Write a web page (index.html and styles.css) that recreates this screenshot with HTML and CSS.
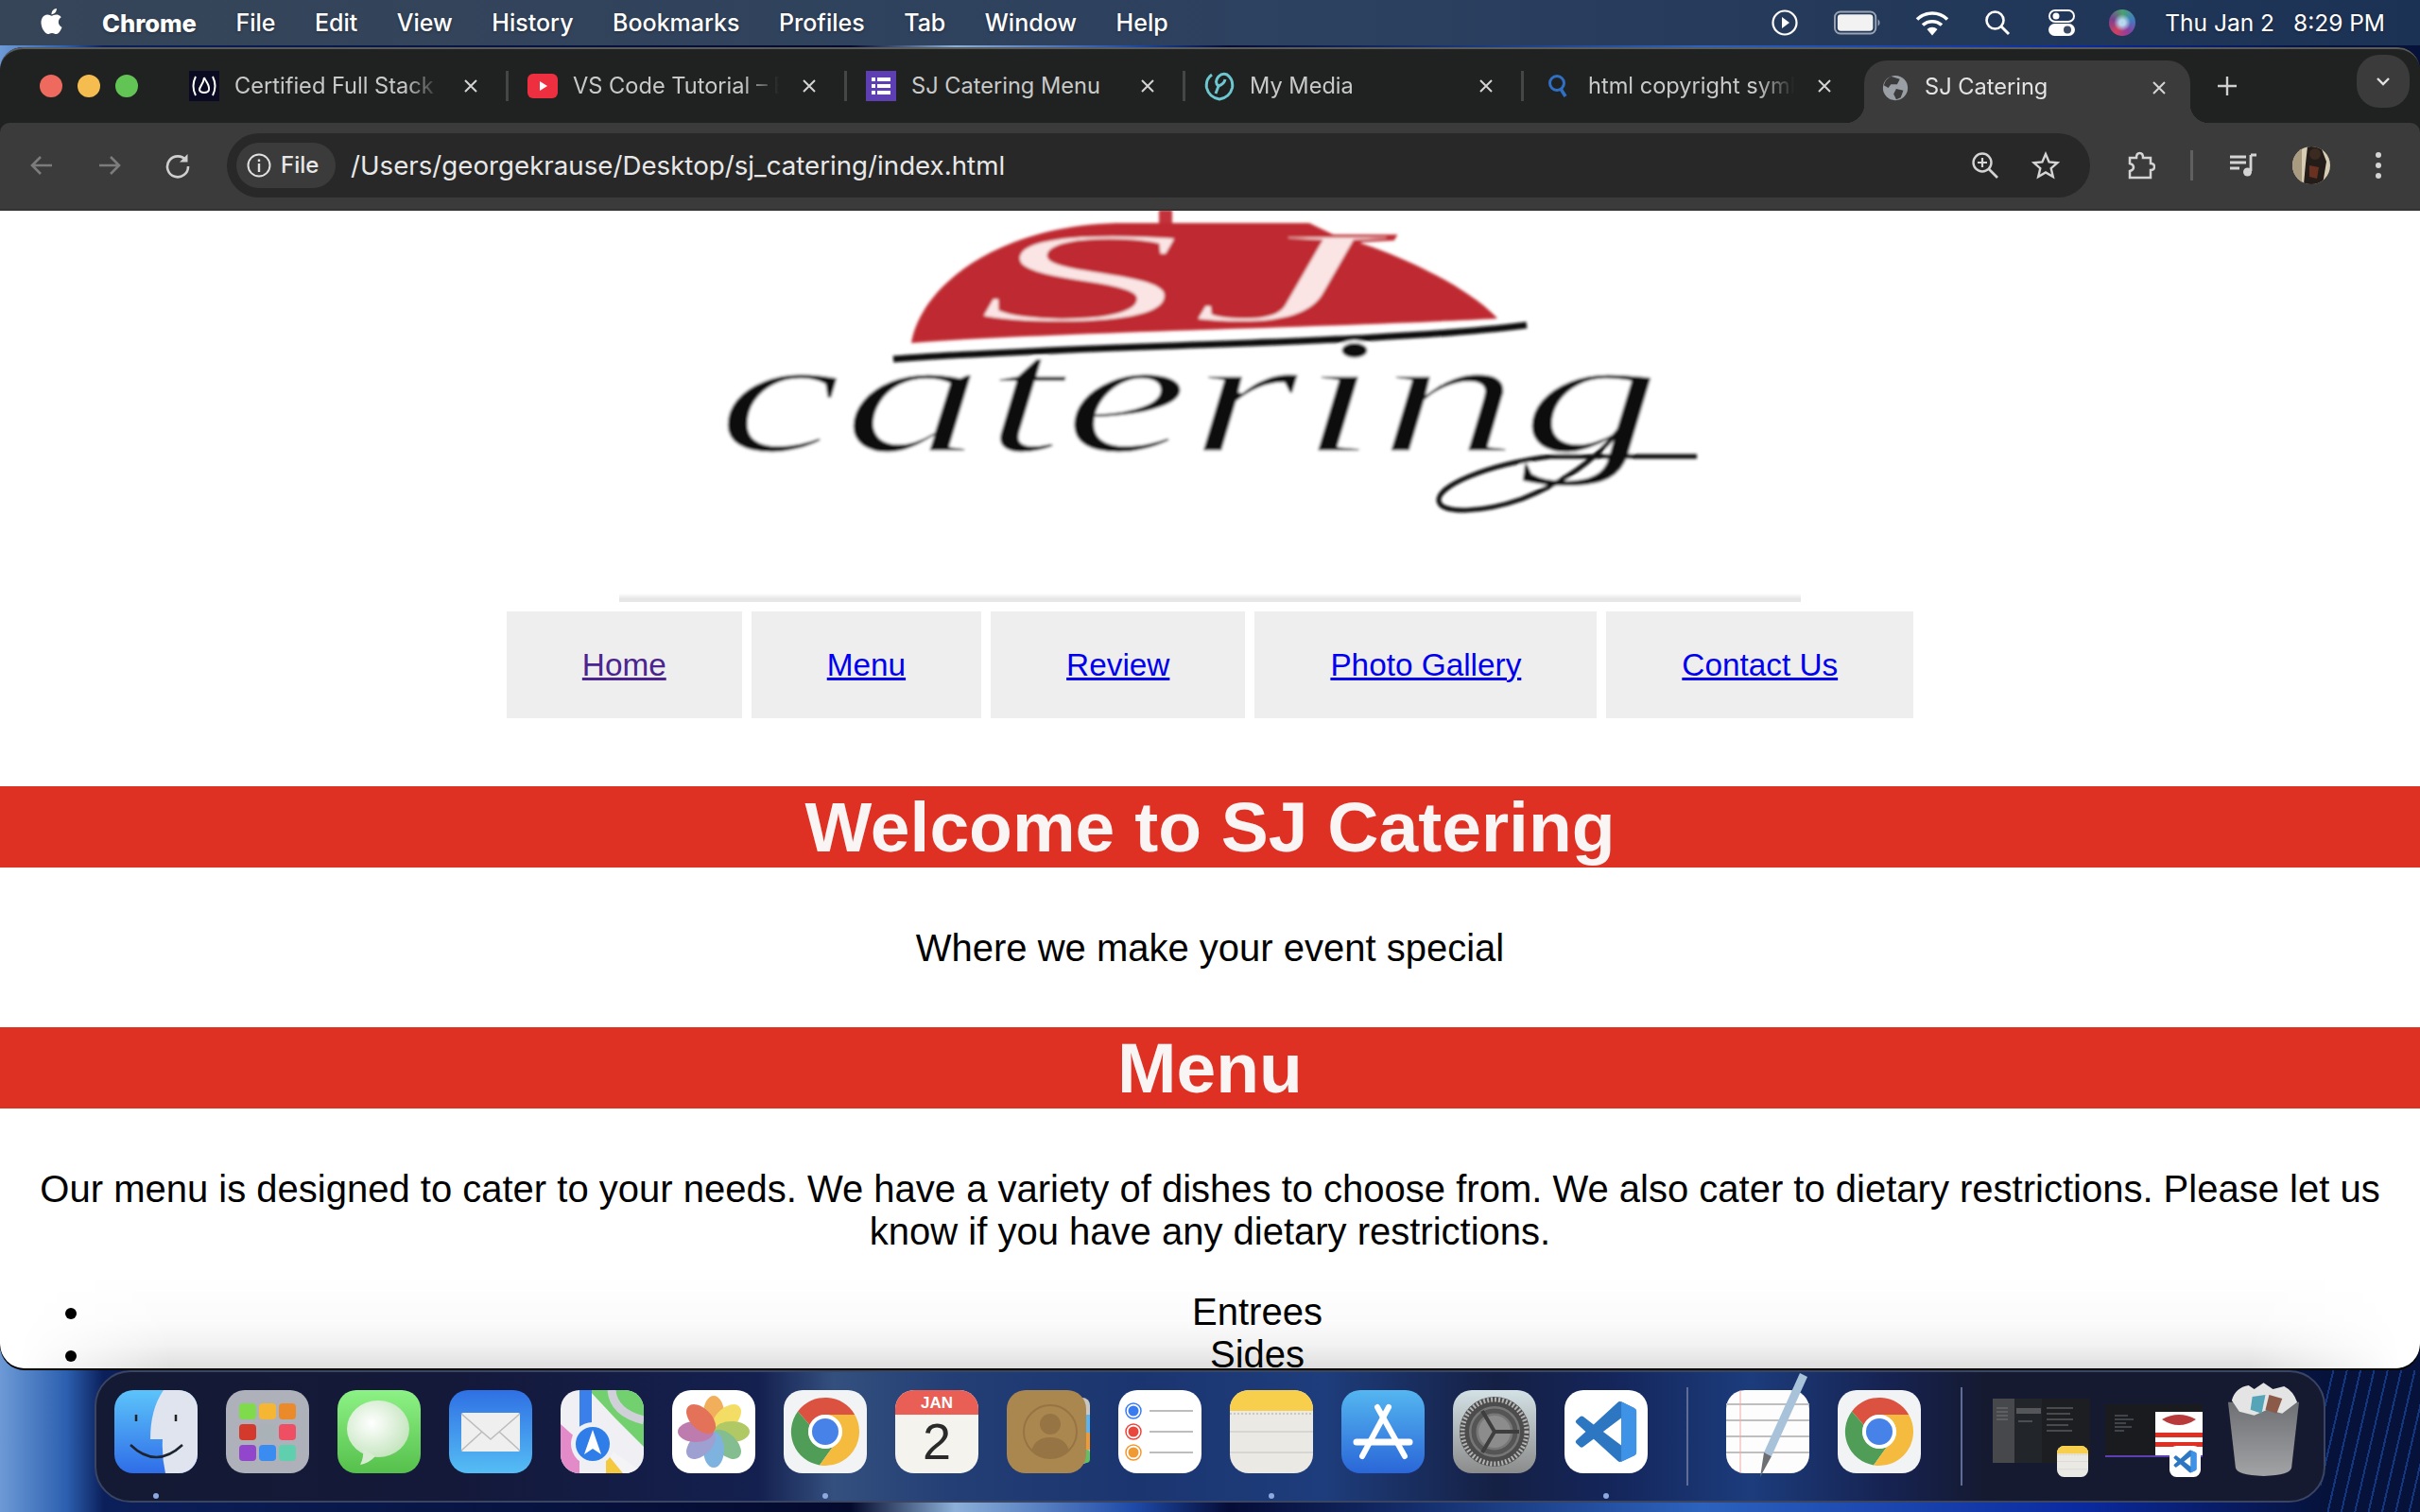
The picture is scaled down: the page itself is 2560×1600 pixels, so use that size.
FILE: index.html
```html
<!DOCTYPE html>
<html lang="en">
<head>
<meta charset="utf-8">
<title>SJ Catering</title>
<link rel="stylesheet" href="styles.css">
</head>
<body>
<svg class="defs" aria-hidden="true">
  <defs>
    <linearGradient id="gMsg" x1="0" y1="0" x2="0" y2="1"><stop offset="0" stop-color="#8df285"/><stop offset="1" stop-color="#56c04c"/></linearGradient>
    <linearGradient id="gMail" x1="0" y1="0" x2="0" y2="1"><stop offset="0" stop-color="#2f70e4"/><stop offset="1" stop-color="#55bdf4"/></linearGradient>
    <linearGradient id="gStore" x1="0" y1="0" x2="0" y2="1"><stop offset="0" stop-color="#54b6f0"/><stop offset="1" stop-color="#2a66d8"/></linearGradient>
    <linearGradient id="gSet" x1="0" y1="0" x2="0" y2="1"><stop offset="0" stop-color="#d3e1e5"/><stop offset="1" stop-color="#8b8b8b"/></linearGradient>
    <linearGradient id="gFinder" x1="0" y1="0" x2="0" y2="1"><stop offset="0" stop-color="#5cc4fa"/><stop offset="1" stop-color="#2f6de8"/></linearGradient>
    <linearGradient id="gTrash" x1="0" y1="0" x2="0" y2="1"><stop offset="0" stop-color="#6e7074"/><stop offset="1" stop-color="#a2a3a5"/></linearGradient>
    <radialGradient id="gBubble" cx=".4" cy=".4" r=".7"><stop offset="0" stop-color="#fff"/><stop offset="1" stop-color="#bfe2b8"/></radialGradient>
    <symbol id="i-chrome" viewBox="0 0 88 88">
      <rect width="88" height="88" rx="20" fill="#f2f3f5"/>
      <path d="M15 22.500A36 36 0 0 1 75.200 26L44 26A18 18 0 0 0 27.600 37Z" fill="#db5240"/>
      <path d="M15 22.500A36 36 0 0 0 38 79.500L52 60A18 18 0 0 1 27.600 37Z" fill="#4f9d57"/>
      <path d="M75.200 26A36 36 0 0 1 38 79.500L52 60A18 18 0 0 0 44 26Z" fill="#f4bb3f"/>
      <circle cx="44" cy="44" r="18" fill="#fff"/>
      <circle cx="44" cy="44" r="14" fill="#4682e8"/>
    </symbol>
    <symbol id="i-notes" viewBox="0 0 88 88">
      <rect width="88" height="88" rx="20" fill="#ebe9e4"/>
      <path d="M0 22V20A20 20 0 0 1 20 0H68A20 20 0 0 1 88 20V22Z" fill="#f8cf4c"/>
      <path d="M0 44H88M0 66H88" stroke="#d2d0cb" stroke-width="1.500"/>
      <path d="M0 25H88" stroke="#c9c7c2" stroke-width="2" stroke-dasharray="2 2"/>
    </symbol>
    <symbol id="i-code" viewBox="0 0 88 88">
      <rect width="88" height="88" rx="20" fill="#fff"/>
      <g transform="translate(12 12) scale(2.670)">
        <path fill="#2d76c2" d="M23.150 2.587L18.210.210a1.494 1.494 0 0 0-1.705.290l-9.460 8.630-4.120-3.128a.999.999 0 0 0-1.276.057L.327 7.261A1 1 0 0 0 .326 8.740L3.899 12 .326 15.260a1 1 0 0 0 .001 1.479L1.650 17.940a.999.999 0 0 0 1.276.057l4.120-3.128 9.460 8.630a1.492 1.492 0 0 0 1.704.290l4.942-2.377A1.500 1.500 0 0 0 24 20.060V3.939a1.500 1.500 0 0 0-.850-1.352zm-5.146 14.861L10.826 12l7.178-5.448v10.896z"/>
        <path fill="#3f93e6" d="M18.004 0.050c.090 0 .150.100.206.160l4.940 2.377A1.500 1.500 0 0 1 24 3.939V20.060a1.500 1.500 0 0 1-.850 1.353l-4.942 2.377c-.070.030-.130.100-.204.160Z"/>
      </g>
    </symbol>
    <symbol id="i-x" viewBox="0 0 16 16"><path d="M2 2L14 14M14 2L2 14" stroke="#d4d4d4" stroke-width="2" fill="none"/></symbol>
  </defs>
</svg>

<header class="menubar">
  <svg class="apple" viewBox="0 0 24 24"><path fill="#fff" d="M12.152 6.896c-.948 0-2.415-1.078-3.960-1.040-2.040.027-3.910 1.183-4.961 3.014-2.117 3.675-.546 9.103 1.519 12.090 1.013 1.454 2.208 3.090 3.792 3.039 1.520-.065 2.090-.987 3.935-.987 1.831 0 2.350.987 3.960.948 1.637-.026 2.676-1.480 3.676-2.948 1.156-1.688 1.636-3.325 1.662-3.415-.039-.013-3.182-1.221-3.220-4.857-.026-3.040 2.480-4.494 2.597-4.559-1.429-2.090-3.623-2.324-4.390-2.376-2-.156-3.675 1.090-4.610 1.090zM15.530 3.830c.843-1.012 1.400-2.427 1.245-3.830-1.207.052-2.662.805-3.532 1.818-.780.896-1.454 2.338-1.273 3.714 1.338.104 2.715-.688 3.559-1.701"/></svg>
  <nav class="menus">
    <span class="app">Chrome</span><span>File</span><span>Edit</span><span>View</span><span>History</span><span>Bookmarks</span><span>Profiles</span><span>Tab</span><span>Window</span><span>Help</span>
  </nav>
  <div class="status">
    <svg class="st st-play" viewBox="0 0 28 28"><circle cx="14" cy="14" r="12.500" fill="none" stroke="#fff" stroke-width="2.200"/><path d="M11 8L19 14L11 20Z" fill="#fff"/></svg>
    <svg class="st st-batt" viewBox="0 0 52 26"><rect x="1" y="1" width="45" height="24" rx="6" fill="none" stroke="#9aa4b2" stroke-width="2"/><rect x="4" y="4" width="39" height="18" rx="3.500" fill="#f2f2f2"/><path d="M48.500 9a5 5 0 0 1 0 8Z" fill="#9aa4b2"/></svg>
    <svg class="st st-wifi" viewBox="0 0 36 28"><g fill="none" stroke="#fff" stroke-width="3.600"><path d="M2 10.500a23 23 0 0 1 32 0"/><path d="M8 16.500a15 15 0 0 1 20 0"/></g><path d="M12.500 21a8 8 0 0 1 11 0L18 27.500Z" fill="#fff"/></svg>
    <svg class="st st-search" viewBox="0 0 28 28"><circle cx="11.500" cy="11.500" r="9" fill="none" stroke="#fff" stroke-width="2.600"/><path d="M18 18L26 26" stroke="#fff" stroke-width="3"/></svg>
    <svg class="st st-ctl" viewBox="0 0 28 28"><rect x="1" y="1" width="26" height="12" rx="6" fill="none" stroke="#fff" stroke-width="2"/><circle cx="8" cy="7" r="3.500" fill="#fff"/><rect x="0" y="15" width="28" height="13" rx="6.500" fill="#fff"/><circle cx="20" cy="21.500" r="4" fill="#3a4a63"/></svg>
    <span class="siri"></span>
    <time class="clock"><span>Thu Jan 2</span><span>8:29 PM</span></time>
  </div>
</header>

<main class="window">
  <div class="tabstrip">
    <div class="lights"><i class="light red"></i><i class="light amber"></i><i class="light green"></i></div>
    <div class="tab">
      <svg class="fav" viewBox="0 0 32 32"><rect width="32" height="32" fill="#0a0a23"/><path d="M7 6Q2 16 7 26M25 6Q30 16 25 26" fill="none" stroke="#fff" stroke-width="2"/><path d="M16 7C18 12 22 15 21 20C20 24 12 24 11 20C11 16 15 15 16 7Z" fill="none" stroke="#fff" stroke-width="2"/></svg>
      <span class="title">Certified Full Stack Developer</span>
      <svg class="close"><use href="#i-x"/></svg>
    </div><i class="tab-sep"></i>
    <div class="tab">
      <svg class="fav" viewBox="0 0 32 32"><rect y="3" width="32" height="26" rx="6" fill="#ee2f3f"/><path d="M13 11L21 16L13 21Z" fill="#fff"/></svg>
      <span class="title">VS Code Tutorial – Beginner</span>
      <svg class="close"><use href="#i-x"/></svg>
    </div><i class="tab-sep"></i>
    <div class="tab">
      <svg class="fav" viewBox="0 0 32 32"><rect width="32" height="32" fill="#5d3fb3"/><g fill="#fff"><rect x="6" y="7" width="4" height="4"/><rect x="12" y="7" width="14" height="4"/><rect x="6" y="14" width="4" height="4"/><rect x="12" y="14" width="14" height="4"/><rect x="6" y="21" width="4" height="4"/><rect x="12" y="21" width="14" height="4"/></g></svg>
      <span class="title title-full">SJ Catering Menu</span>
      <svg class="close"><use href="#i-x"/></svg>
    </div><i class="tab-sep"></i>
    <div class="tab">
      <svg class="fav" viewBox="0 0 32 32"><g fill="none" stroke="#6cc7d1" stroke-width="3"><path d="M8 4Q1 9 2.500 18Q5 28 16 30Q27 28 29.500 18Q31 9 24 4Q19 2 15 6Q10 12 15 16Q21 14 22 9"/><path d="M15 16L12 24"/></g></svg>
      <span class="title">My Media</span>
      <svg class="close"><use href="#i-x"/></svg>
    </div><i class="tab-sep"></i>
    <div class="tab tab-search">
      <svg class="fav" viewBox="0 0 32 32"><circle cx="15" cy="13" r="7.500" fill="none" stroke="#2f6fc4" stroke-width="3"/><path d="M19 19L24 27" stroke="#2f6fc4" stroke-width="3.500"/></svg>
      <span class="title">html copyright symbol</span>
      <svg class="close"><use href="#i-x"/></svg>
    </div>
    <div class="tab tab-active">
      <svg class="fav" viewBox="0 0 32 32"><circle cx="16" cy="16" r="14" fill="#9a9fa6"/><path d="M11 3L21 6L18 12L11 12L8 16L3 13Q5 6 11 3ZM17 17L25 19L22 27L17 29L14 23Z" fill="#3b3b3b"/></svg>
      <span class="title">SJ Catering</span>
      <svg class="close"><use href="#i-x"/></svg>
    </div>
    <svg class="newtab" viewBox="0 0 24 24"><path d="M12 2V22M2 12H22" stroke="#d0d0d0" stroke-width="2.400"/></svg>
    <div class="tabsearch"><svg class="chev" viewBox="0 0 16 10"><path d="M2 2L8 8L14 2" fill="none" stroke="#e2e2e2" stroke-width="2.400"/></svg></div>
  </div>

  <div class="toolbar">
    <svg class="tool tool-back" viewBox="0 0 28 28"><path d="M25 14H4M13 5L4 14L13 23" fill="none" stroke="#7c7c7c" stroke-width="2.600"/></svg>
    <svg class="tool tool-fwd" viewBox="0 0 28 28"><path d="M3 14H24M15 5L24 14L15 23" fill="none" stroke="#7c7c7c" stroke-width="2.600"/></svg>
    <svg class="tool tool-reload" viewBox="0 0 28 28"><path d="M23 9A11 11 0 1 0 25 15" fill="none" stroke="#cfcfcf" stroke-width="2.600"/><path d="M24.500 2V10.500H16Z" fill="#cfcfcf"/></svg>
    <div class="omnibox">
      <div class="chip">
        <svg class="info" viewBox="0 0 26 26"><circle cx="13" cy="13" r="11.500" fill="none" stroke="#e0e0e0" stroke-width="2"/><rect x="11.800" y="11" width="2.400" height="9" fill="#e0e0e0"/><rect x="11.800" y="6.500" width="2.400" height="2.600" fill="#e0e0e0"/></svg>
        <span>File</span>
      </div>
      <span class="url">/Users/georgekrause/Desktop/sj_catering/index.html</span>
      <svg class="omni-ic omni-zoom" viewBox="0 0 30 30"><circle cx="12" cy="12" r="9.500" fill="none" stroke="#d4d4d4" stroke-width="2.400"/><path d="M12 7V17M7 12H17" stroke="#d4d4d4" stroke-width="2.200"/><path d="M19 19L28 28" stroke="#d4d4d4" stroke-width="2.600"/></svg>
      <svg class="omni-ic omni-star" viewBox="0 0 30 30"><path d="M15 3L18.600 11.400L27.500 12.200L20.700 18.200L22.800 27L15 22.400L7.200 27L9.300 18.200L2.500 12.200L11.400 11.400Z" fill="none" stroke="#d4d4d4" stroke-width="2.400"/></svg>
    </div>
    <svg class="tool-r tool-ext" viewBox="0 0 32 32"><path d="M5 8H12Q12 3 15.500 3Q19 3 19 8H27V14Q31 14 31 17.500Q31 21 27 21V29H5V22Q9 21 9 18Q9 15 5 14Z" fill="none" stroke="#d4d4d4" stroke-width="2.500"/></svg>
    <i class="tool-sep"></i>
    <svg class="tool-r tool-media" viewBox="0 0 32 32"><path d="M2 7H19M2 13H19M2 19H12" stroke="#d4d4d4" stroke-width="2.800"/><path d="M24 5V22" stroke="#d4d4d4" stroke-width="2.800"/><path d="M24 5H30" stroke="#d4d4d4" stroke-width="3"/><circle cx="20.500" cy="23" r="4.500" fill="#d4d4d4"/></svg>
    <svg class="avatar" viewBox="0 0 40 40"><defs><clipPath id="cAv"><circle cx="20" cy="20" r="20"/></clipPath></defs><g clip-path="url(#cAv)"><rect width="40" height="40" fill="#d8cdb4"/><rect width="10" height="40" fill="#a89b80"/><path d="M16 0H30L36 16L32 40H12L14 18Z" fill="#231c18"/><circle cx="24" cy="8" r="6" fill="#3a2a20"/><path d="M18 20L28 22L26 34L18 32Z" fill="#6a3020"/></g></svg>
    <svg class="tool-r tool-dots" viewBox="0 0 8 30"><circle cx="4" cy="4" r="3" fill="#d4d4d4"/><circle cx="4" cy="15" r="3" fill="#d4d4d4"/><circle cx="4" cy="26" r="3" fill="#d4d4d4"/></svg>
  </div>

  <div class="page">
    <svg class="logo" viewBox="655 223 1250 405" role="img" aria-label="SJ catering logo">
      <defs><filter id="soft" x="-5%" y="-5%" width="110%" height="110%"><feGaussianBlur stdDeviation="1.800"/></filter></defs>
      <g filter="url(#soft)">
        <path d="M1226 236V222H1240V236Z" fill="#c3303a"/>
        <path d="M964 363C975 300 1060 236 1190 236H1385L1412 249C1490 270 1560 310 1584 337C1450 345 1100 352 964 363Z" fill="#bf2a33"/>
        <text class="logo-sj" x="1030" y="340" textLength="425" lengthAdjust="spacingAndGlyphs">SJ</text>
        <path d="M945 380C1150 364 1450 365 1615 344" fill="none" stroke="#0d0d0d" stroke-width="7"/>
        <text class="logo-word" x="758" y="478" textLength="1000" lengthAdjust="spacingAndGlyphs">catering</text>
        <path d="M1640 483H1795M1640 483C1570 492 1520 515 1522 530C1524 545 1570 542 1610 528C1660 508 1700 480 1730 430" fill="none" stroke="#111" stroke-width="5"/>
      </g>
    </svg>
    <hr class="rule">
    <nav class="site-nav">
      <a class="visited" href="#home">Home</a>
      <a href="#menu">Menu</a>
      <a href="#review">Review</a>
      <a href="#gallery">Photo Gallery</a>
      <a href="#contact">Contact Us</a>
    </nav>
    <h1 class="banner banner-first">Welcome to SJ Catering</h1>
    <p class="lead">Where we make your event special</p>
    <h1 class="banner">Menu</h1>
    <p class="lead lead-last">Our menu is designed to cater to your needs. We have a variety of dishes to choose from. We also cater to dietary restrictions. Please let us know if you have any dietary restrictions.</p>
    <ul class="cats">
      <li>Entrees</li>
      <li>Sides</li>
      <li>Desserts</li>
    </ul>
    <div class="dock-glow"></div>
  </div>
</main>

<footer class="dock">
  <div class="dock-item running"><svg class="app-ic" viewBox="0 0 88 88"><rect width="88" height="88" rx="20" fill="url(#gFinder)"/><path d="M52 0H68A20 20 0 0 1 88 20V68A20 20 0 0 1 68 88H54Q50 70 51 52H38Q38 20 52 0Z" fill="#dfe4ee"/><path d="M23 26V33M65 26V33" stroke="#222" stroke-width="2.500"/><path d="M17 58Q44 84 72 58" fill="none" stroke="#1d2430" stroke-width="2.500"/></svg></div>
  <div class="dock-item"><svg class="app-ic" viewBox="0 0 88 88"><rect width="88" height="88" rx="20" fill="#aeb0ba"/><g><rect x="14" y="14" width="18" height="17" rx="4" fill="#7fdb4b"/><rect x="35" y="14" width="18" height="17" rx="4" fill="#f5b733"/><rect x="56" y="14" width="18" height="17" rx="4" fill="#ea8a2a"/><rect x="14" y="36" width="18" height="17" rx="4" fill="#d33a2b"/><rect x="35" y="36" width="18" height="17" rx="4" fill="#a9b2b6"/><rect x="56" y="36" width="18" height="17" rx="4" fill="#ef4f63"/><rect x="14" y="58" width="18" height="17" rx="4" fill="#9246cc"/><rect x="35" y="58" width="18" height="17" rx="4" fill="#3a8cf0"/><rect x="56" y="58" width="18" height="17" rx="4" fill="#5fcfae"/></g></svg></div>
  <div class="dock-item"><svg class="app-ic" viewBox="0 0 88 88"><rect width="88" height="88" rx="20" fill="url(#gMsg)"/><ellipse cx="43" cy="41" rx="33" ry="30" fill="url(#gBubble)"/><path d="M27 62Q28 72 24 79Q34 77 40 70Z" fill="#d7ecd2"/></svg></div>
  <div class="dock-item"><svg class="app-ic" viewBox="0 0 88 88"><rect width="88" height="88" rx="20" fill="url(#gMail)"/><rect x="13" y="24" width="62" height="41" rx="2" fill="#efefef"/><path d="M13 25L44 52L75 25M13 64L35 44M75 64L53 44" fill="none" stroke="#bcbcbc" stroke-width="1.500"/></svg></div>
  <div class="dock-item"><svg class="app-ic" viewBox="0 0 88 88"><defs><clipPath id="cMaps"><rect width="88" height="88" rx="20"/></clipPath></defs><g clip-path="url(#cMaps)"><rect width="88" height="88" fill="#f0f0f4"/><path d="M30 0H88V60L58 30Z" fill="#72d06e"/><path d="M0 36L20 54L20 88H0Z" fill="#e28bc8"/><path d="M48 60L88 88H48Z" fill="#f4f4f7"/><path d="M48 88V66L66 88Z" fill="#f5c93f"/><path d="M20 0H33V46H20Z" fill="#3b80ea"/><path d="M54 0Q56 24 88 32" fill="none" stroke="#cfd0d8" stroke-width="9"/><circle cx="34" cy="57" r="23" fill="#eef0f4"/><circle cx="34" cy="57" r="18" fill="#2f7de8"/><path d="M34 42L43 68L34 62L25 68Z" fill="#fff"/></g></svg></div>
  <div class="dock-item"><svg class="app-ic" viewBox="0 0 88 88"><rect width="88" height="88" rx="20" fill="#fff"/><g opacity=".85"><ellipse cx="44" cy="25" rx="11" ry="19" fill="#f0a23f"/><ellipse cx="44" cy="25" rx="11" ry="19" fill="#f2d84a" transform="rotate(45 44 44)"/><ellipse cx="44" cy="25" rx="11" ry="19" fill="#a4c04a" transform="rotate(90 44 44)"/><ellipse cx="44" cy="25" rx="11" ry="19" fill="#6fb37d" transform="rotate(135 44 44)"/><ellipse cx="44" cy="25" rx="11" ry="19" fill="#68a5da" transform="rotate(180 44 44)"/><ellipse cx="44" cy="25" rx="11" ry="19" fill="#8c90c8" transform="rotate(225 44 44)"/><ellipse cx="44" cy="25" rx="11" ry="19" fill="#b2669f" transform="rotate(270 44 44)"/><ellipse cx="44" cy="25" rx="11" ry="19" fill="#df5a3d" transform="rotate(315 44 44)"/></g></svg></div>
  <div class="dock-item running"><svg class="app-ic"><use href="#i-chrome"/></svg></div>
  <div class="dock-item"><svg class="app-ic" viewBox="0 0 88 88"><rect width="88" height="88" rx="20" fill="#f5f3ee"/><path d="M0 26V20A20 20 0 0 1 20 0H68A20 20 0 0 1 88 20V26Z" fill="#ea5f55"/><text class="cal-mon" x="44" y="19">JAN</text><text class="cal-day" x="44" y="73">2</text></svg></div>
  <div class="dock-item"><svg class="app-ic" viewBox="0 0 88 88"><rect x="60" y="8" width="28" height="70" rx="8" fill="#c9c7c0"/><rect x="78" y="26" width="10" height="19" fill="#5cb4ee"/><rect x="78" y="45" width="10" height="18" fill="#ef9a35"/><rect x="78" y="63" width="10" height="14" rx="4" fill="#62c060"/><rect width="84" height="88" rx="20" fill="#ab8750"/><circle cx="46" cy="44" r="28" fill="none" stroke="#977443" stroke-width="2"/><circle cx="46" cy="36" r="11" fill="#977443"/><path d="M26 64Q30 50 46 50Q62 50 66 64Q46 80 26 64Z" fill="#977443"/></svg></div>
  <div class="dock-item"><svg class="app-ic" viewBox="0 0 88 88"><rect width="88" height="88" rx="20" fill="#fff"/><circle cx="16" cy="22" r="8" fill="#fff" stroke="#3a7cf0" stroke-width="1.500"/><circle cx="16" cy="22" r="5.500" fill="#3a7cf0"/><circle cx="16" cy="44" r="8" fill="#fff" stroke="#e8473e" stroke-width="1.500"/><circle cx="16" cy="44" r="5.500" fill="#e8473e"/><circle cx="16" cy="66" r="8" fill="#fff" stroke="#ef9a35" stroke-width="1.500"/><circle cx="16" cy="66" r="5.500" fill="#ef9a35"/><path d="M33 22H79M33 44H79M33 66H79" stroke="#bdbdbd" stroke-width="2"/></svg></div>
  <div class="dock-item running"><svg class="app-ic"><use href="#i-notes"/></svg></div>
  <div class="dock-item"><svg class="app-ic" viewBox="0 0 88 88"><rect width="88" height="88" rx="20" fill="url(#gStore)"/><g stroke="#fff" stroke-linecap="round" fill="none"><path d="M38 18L67 70" stroke-width="6"/><path d="M50 18L22 70" stroke-width="6"/><path d="M16 55H72" stroke-width="7"/></g></svg></div>
  <div class="dock-item"><svg class="app-ic" viewBox="0 0 88 88"><rect width="88" height="88" rx="20" fill="url(#gSet)"/><circle cx="44" cy="44" r="37" fill="#4c4c4c"/><circle cx="44" cy="44" r="34" fill="none" stroke="#b5b5b5" stroke-width="5" stroke-dasharray="2 2"/><circle cx="44" cy="44" r="27" fill="#777"/><circle cx="44" cy="44" r="22" fill="none" stroke="#555" stroke-width="5"/><circle cx="44" cy="44" r="17" fill="#8c8c8c"/><path d="M44 44L31 22M44 44L70 44M44 44L31 66" stroke="#3e3e3e" stroke-width="4"/></svg></div>
  <div class="dock-item running"><svg class="app-ic"><use href="#i-code"/></svg></div>
  <i class="dock-sep"></i>
  <div class="dock-item"><svg class="app-ic app-ic-tall" viewBox="0 -24 88 124"><rect width="88" height="88" rx="20" fill="#fdfdfd"/><path d="M0 15H88M0 32H88M0 49H88M0 66H88" stroke="#bfbfbf" stroke-width="2"/><path d="M15 0V88" stroke="#f0a9a5" stroke-width="1"/><path d="M78 -18L86 -14L48 70L40 66Z" fill="#a8c2da"/><path d="M40 66L48 70L36 92Z" fill="#6c7074"/></svg></div>
  <div class="dock-item"><svg class="app-ic"><use href="#i-chrome"/></svg></div>
  <i class="dock-sep dock-sep-2"></i>
  <div class="thumb">
    <svg class="thumb-win thumb-notes" viewBox="0 0 103 68"><rect width="103" height="68" rx="1" fill="#22262a"/><rect width="23" height="68" fill="#47484b"/><rect x="52" width="51" height="68" fill="#1c1e21"/><rect x="25" y="10" width="26" height="6" fill="#54565a"/><path d="M57 10H85M57 16H82M57 22H85M57 28H80M57 34H84M4 10H16M4 14H16M4 18H16M4 22H16M27 24H42" stroke="#777" stroke-width="1"/></svg>
    <svg class="thumb-badge thumb-badge-notes"><use href="#i-notes"/></svg>
  </div>
  <div class="thumb thumb-2">
    <svg class="thumb-win thumb-vs" viewBox="0 0 103 56"><rect width="103" height="56" fill="#1a1b1e"/><rect x="53" y="8" width="50" height="46" fill="#fff"/><rect x="53" y="30" width="50" height="5" fill="#de3124"/><rect x="53" y="40" width="50" height="5" fill="#de3124"/><path d="M60 16Q78 6 96 16Q78 28 60 16Z" fill="#b93a3a"/><rect y="54" width="103" height="2" fill="#5d3fb3"/><path d="M10 12H24M10 16H30M10 20H22M10 24H28M10 28H20" stroke="#6a6e78" stroke-width="1"/></svg>
    <svg class="thumb-badge thumb-badge-code"><use href="#i-code"/></svg>
  </div>
  <div class="dock-item trash"><svg class="trash-ic" viewBox="0 0 80 102"><path d="M2 22L10 92Q11 100 40 101Q69 100 70 92L78 22Z" fill="url(#gTrash)"/><path d="M6 20Q10 6 24 4L30 8L40 1L50 8L62 5Q72 10 76 22L60 34L44 30L30 36L14 32Z" fill="#e4e4e4"/><path d="M28 16L42 14L38 34L26 30Z" fill="#55a4b8"/><path d="M46 14L60 18L54 34L42 30Z" fill="#8b5a48"/></svg></div>
</footer>
</body>
</html>
```

FILE: styles.css
```css
* { box-sizing: border-box; }
html, body { margin: 0; padding: 0; }
body {
  position: relative;
  width: 2560px;
  height: 1600px;
  overflow: hidden;
  font-family: "Liberation Sans", Arial, sans-serif;
  background:
    repeating-linear-gradient(103deg, transparent 0 12px, rgba(28, 85, 184, .55) 12px 14px) right bottom / 105px 150px no-repeat,
    linear-gradient(90deg, #6d9ad6 0, #2c60b0 70px, #0b1f5a 110px, #040a2c 900px, #8cb0d8 1010px, #1e4aa8 1200px, #050c36 1300px, #2c62bd 1800px, #0a2aa0 2200px, #06123a 2460px, #06123a 2560px);
}
.defs { position: absolute; width: 0; height: 0; }

/* macOS menu bar */
.menubar {
  display: flex;
  align-items: center;
  height: 48px;
  padding-left: 41px;
  background: linear-gradient(90deg, #364558, #2c4160 55%, #1c3255);
  color: #fff;
  font-family: Inter, "Liberation Sans", sans-serif;
  font-size: 25px;
  font-weight: 500;
  text-shadow: 0 1px 3px rgba(0, 0, 0, .4);
}
.apple { width: 27px; height: 31px; margin-top: -3px; }
.menus { display: flex; gap: 41.500px; margin-left: 40px; }
.menus .app { font-size: 25.500px; font-weight: 800; }
.status { display: flex; align-items: center; margin-left: auto; padding-right: 37px; font-size: 24.500px; }
.st { display: block; flex: none; }
.st-play { width: 28px; height: 28px; margin-right: 38px; }
.st-batt { width: 50px; height: 26px; margin-right: 36px; }
.st-wifi { width: 36px; height: 28px; margin-right: 37px; }
.st-search { width: 28px; height: 28px; margin-right: 40px; }
.st-ctl { width: 28px; height: 28px; margin-right: 36px; }
.siri {
  width: 28px;
  height: 28px;
  border-radius: 50%;
  margin-right: 31px;
  background: radial-gradient(circle, #b8d8f0 0 15%, transparent 45%), conic-gradient(#4ba06e, #3f7fc0, #8a3fa0, #d04060, #7a4090, #4ba06e);
}
.clock { display: flex; gap: 20px; font-weight: 400; }

/* Browser window */
.window {
  position: relative;
  height: 1398px;
  margin-top: 2px;
  border-radius: 24px 24px 26px 26px;
  overflow: hidden;
  background: #202221;
  box-shadow: 0 2px 0 #000;
}
.tabstrip {
  display: flex;
  align-items: center;
  height: 80px;
  border-top: 2px solid #5a5c5b;
  border-radius: 24px 24px 0 0;
  color: #c9c9c9;
  font-family: Inter, "Liberation Sans", sans-serif;
  font-size: 23.600px;
}
.lights { display: flex; gap: 16px; width: 180px; padding-left: 42px; }
.light { display: block; width: 24px; height: 24px; border-radius: 50%; }
.red { background: #ee6a5f; }
.amber { background: #f5bd4f; }
.green { background: #61c454; }
.tab { position: relative; display: flex; align-items: center; flex: none; width: 355px; padding: 0 29px 0 20px; }
.tab-search { width: 358px; padding-right: 32px; }
.tab-sep { display: block; flex: none; width: 3px; height: 32px; background: #454746; }
.fav { flex: none; width: 32px; height: 32px; }
.title {
  flex: 1;
  min-width: 0;
  margin: -2px 17px 0 16px;
  overflow: hidden;
  white-space: nowrap;
  -webkit-mask-image: linear-gradient(90deg, #000 80%, transparent 97%);
  mask-image: linear-gradient(90deg, #000 80%, transparent 97%);
}
.title-full { -webkit-mask-image: none; mask-image: none; }
.close { flex: none; width: 16px; height: 16px; }
.tab-active {
  align-self: flex-end;
  width: 345px;
  height: 66px;
  margin-left: 2px;
  padding: 0 25px 9px 18px;
  border-radius: 24px 24px 0 0;
  background: #3b3b3b;
  color: #e4e4e4;
}
.tab-active .fav { width: 30px; height: 30px; }
.tab-active::before,
.tab-active::after {
  content: "";
  position: absolute;
  bottom: 0;
  width: 20px;
  height: 20px;
}
.tab-active::before { left: -20px; background: radial-gradient(circle at 0 0, transparent 20px, #3b3b3b 20.500px); }
.tab-active::after { right: -20px; background: radial-gradient(circle at 100% 0, transparent 20px, #3b3b3b 20.500px); }
.newtab { width: 24px; height: 24px; margin-left: 27px; flex: none; }
.tabsearch {
  display: flex;
  align-items: center;
  justify-content: center;
  width: 56px;
  height: 56px;
  margin: -10px 11px 0 auto;
  border-radius: 24px;
  background: #3b3b3b;
}
.chev { width: 16px; height: 10px; }

.toolbar {
  display: flex;
  align-items: center;
  height: 93px;
  padding: 0 0 2px 30px;
  background: #3b3b3b;
  border-bottom: 2px solid #333;
  border-radius: 10px 10px 0 0;
}
.tool { flex: none; width: 28px; height: 28px; }
.tool-fwd { margin-left: 44px; }
.tool-reload { margin-left: 44px; }
.omnibox {
  display: flex;
  align-items: center;
  width: 1971px;
  height: 68px;
  margin-left: 38px;
  padding: 0 32px 0 10px;
  border-radius: 34px;
  background: #282828;
  color: #e8e8e8;
  font-family: Inter, "Liberation Sans", sans-serif;
}
.chip {
  display: flex;
  align-items: center;
  gap: 10px;
  width: 105px;
  height: 48px;
  padding-left: 11px;
  border-radius: 24px;
  background: #3b3b3b;
  font-size: 24px;
  font-weight: 500;
}
.info { width: 26px; height: 26px; }
.url { margin-left: 16px; font-size: 27.700px; letter-spacing: 0; }
.omni-ic { flex: none; width: 30px; height: 30px; }
.omni-zoom { margin-left: auto; }
.omni-star { margin-left: 34px; }
.tool-r { flex: none; }
.tool-ext { width: 32px; height: 32px; margin-left: 37px; }
.tool-sep { display: block; width: 3px; height: 32px; margin-left: 37px; background: #606060; }
.tool-media { width: 32px; height: 32px; margin-left: 37px; }
.avatar { flex: none; width: 40px; height: 40px; margin-left: 36px; }
.tool-dots { width: 8px; height: 30px; margin-left: 47px; }

/* The page itself */
.page {
  position: relative;
  height: 1225px;
  overflow: hidden;
  background: #fff;
  color: #000;
  font-size: 40px;
  text-align: center;
  border-radius: 0 0 24px 24px;
}
.logo { display: block; width: 1250px; height: 405px; margin: 0 auto; }
.logo-sj {
  font-family: "Liberation Serif", serif;
  font-style: italic;
  font-size: 138px;
  fill: #fbe4e4;
  stroke: #bf2a33;
  stroke-width: 3px;
}
.logo-word {
  font-family: "Liberation Serif", serif;
  font-style: italic;
  font-size: 176px;
  fill: #0d0d0d;
  stroke: #fff;
  stroke-width: 3px;
}
.rule {
  width: 1250px;
  height: 9px;
  margin: 0 auto;
  border: 0;
  background: linear-gradient(#fff, #e6e6e6 60%);
}
.site-nav { display: flex; justify-content: center; gap: 10px; margin-top: 10px; }
.site-nav a {
  padding: 37.500px 80px;
  background: #eee;
  color: #0000ee;
  font-size: 33.330px;
  text-decoration-thickness: 3px;
}
.site-nav a.visited { color: #4b2490; }
.banner {
  margin: 0;
  background: #de3124;
  color: #faf5f5;
  font-size: 75px;
  font-weight: 700;
}
.banner-first { margin-top: 72px; }
.lead { margin: 63px 0 61px; }
.lead-last { margin: 63px 20px 40px; }
.cats { margin: 0; padding-left: 100px; }
.dock-glow {
  position: absolute;
  left: 0;
  right: 0;
  bottom: 0;
  height: 100px;
  background: linear-gradient(rgba(0, 0, 0, 0), rgba(0, 0, 0, .015) 50%, rgba(0, 0, 0, .05) 75%, rgba(0, 0, 0, .13));
  -webkit-mask-image: linear-gradient(90deg, transparent 20px, #000 180px, #000 2380px, transparent 2540px);
  mask-image: linear-gradient(90deg, transparent 20px, #000 180px, #000 2380px, transparent 2540px);
}

/* Dock */
.dock {
  position: absolute;
  left: 100px;
  top: 1450px;
  display: flex;
  align-items: flex-start;
  width: 2360px;
  height: 140px;
  padding: 19px 0 0 19px;
  border: 2px solid #3a4463;
  border-radius: 38px;
  background: linear-gradient(90deg, #141a33 0, #14193a 380px, #14204f 700px, #34507f 780px, #233f75 900px, #1b3570 1100px, #1e3d7c 1300px, #152044 1480px, #14255a 1600px, #1c3c7c 1750px, #162250 1900px, #151a30 2000px);
}
.dock-item { position: relative; flex: none; width: 88px; height: 88px; margin-right: 30px; }
.app-ic { display: block; width: 88px; height: 88px; overflow: visible; }
.app-ic-tall { position: absolute; left: 0; top: -24px; height: 124px; }
.running::after {
  content: "";
  position: absolute;
  left: 41px;
  top: 109px;
  width: 6px;
  height: 6px;
  border-radius: 50%;
  background: #8ea8e0;
}
.dock-sep { display: block; flex: none; width: 2px; height: 104px; margin: -3px 40px 0 11px; background: #5f6c95; }
.dock-sep-2 { margin: -3px 32px 0 12px; }
.thumb { position: relative; flex: none; width: 103px; height: 88px; margin-right: 16px; }
.thumb-win { position: absolute; left: 0; display: block; width: 103px; }
.thumb-notes { top: 9px; height: 68px; }
.thumb-vs { top: 15px; height: 56px; }
.thumb-badge { position: absolute; left: 68px; top: 59px; width: 33px; height: 33px; }
.trash { width: 79px; margin-right: 0; margin-left: 9px; }
.trash-ic { position: absolute; left: 0; top: -9px; width: 79px; height: 101px; }
.cal-mon { font-family: "Liberation Sans", sans-serif; font-size: 17px; font-weight: 700; fill: #fff; text-anchor: middle; }
.cal-day { font-family: "Liberation Sans", sans-serif; font-size: 54px; fill: #2a2a2a; text-anchor: middle; }
```
